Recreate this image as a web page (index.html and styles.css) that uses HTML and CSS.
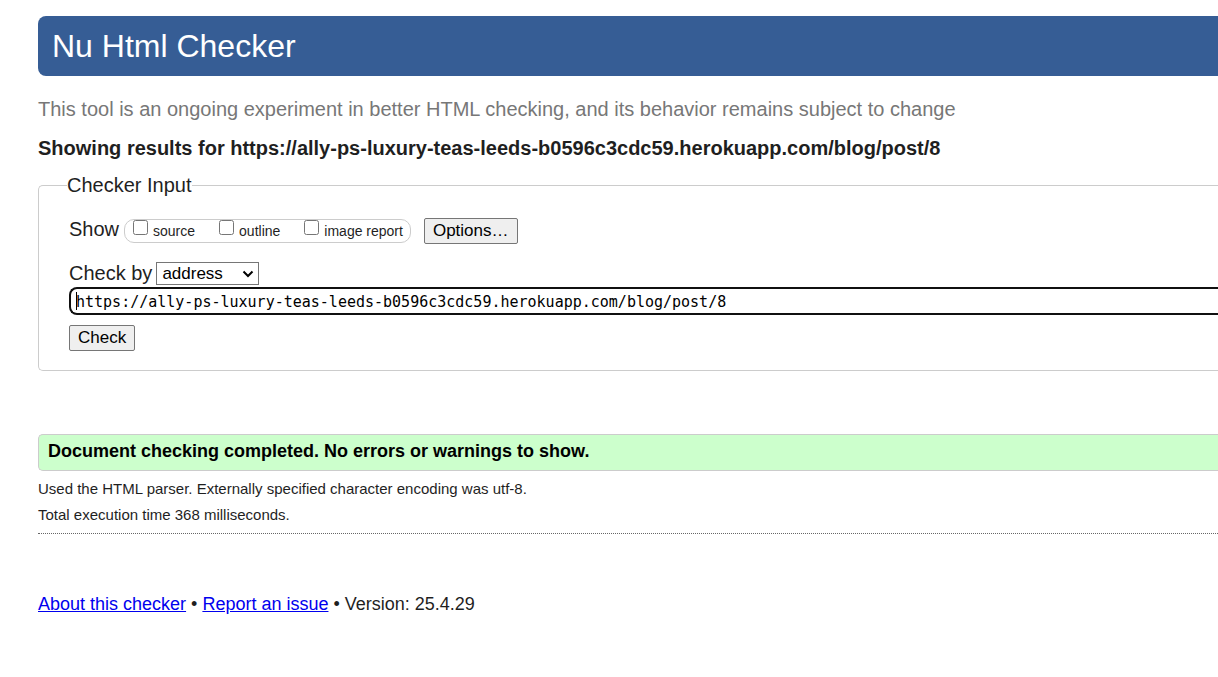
FILE: index.html
```html
<!DOCTYPE html>
<html lang="en">
<head>
<meta charset="utf-8">
<title>Nu Html Checker</title>
<link rel="stylesheet" href="styles.css">
</head>
<body>
<header class="banner"><h1 class="banner-title">Nu Html Checker</h1></header>
<main>
  <p class="note">This tool is an ongoing experiment in better HTML checking, and its behavior remains subject to change</p>
  <h2 class="heading">Showing results for https://ally-ps-luxury-teas-leeds-b0596c3cdc59.herokuapp.com/blog/post/8</h2>
  <form>
    <fieldset class="panel">
      <legend class="legend">Checker Input</legend>
      <div class="show-row">
        <span class="show-label">Show</span>
        <div class="checks">
          <label class="check"><input class="box" type="checkbox"><span>source</span></label>
          <label class="check"><input class="box" type="checkbox"><span>outline</span></label>
          <label class="check"><input class="box" type="checkbox"><span>image report</span></label>
        </div>
        <button class="button" type="button">Options…</button>
      </div>
      <div class="by-row">
        <label for="method">Check by</label>
        <div class="select-wrap">
          <select class="select" id="method"><option>address</option><option>file upload</option><option>text input</option></select>
          <svg class="chevron" viewBox="0 0 12 8" aria-hidden="true"><path d="M1.5 1.5 6 6 10.5 1.5" fill="none" stroke="#000" stroke-width="2"/></svg>
        </div>
      </div>
      <div class="address-wrap">
        <input class="address" type="url" aria-label="Address" value="https://ally-ps-luxury-teas-leeds-b0596c3cdc59.herokuapp.com/blog/post/8">
      </div>
      <button class="button" type="submit">Check</button>
    </fieldset>
  </form>
  <p class="success">Document checking completed. No errors or warnings to show.</p>
  <div class="details">
    <p class="detail">Used the HTML parser. Externally specified character encoding was utf-8.</p>
    <p class="detail">Total execution time 368 milliseconds.</p>
  </div>
</main>
<footer class="footer"><a href="#about">About this checker</a> • <a href="#issue">Report an issue</a> • Version: 25.4.29</footer>
</body>
</html>
```
FILE: styles.css
```css
* { box-sizing: border-box; }
body {
  margin: 0;
  padding: 16px 0 16px 38px;
  background: #fff;
  color: #1f1f1f;
  font: 20px/24px "Liberation Sans", Arial, sans-serif;
}
.banner {
  padding: 10px 14px;
  background: #365d95;
  border-radius: 8px 0 0 8px;
}
.banner-title {
  margin: 0;
  color: #fff;
  font-size: 32px;
  font-weight: 400;
  line-height: 40px;
}
.note { margin: 21px 0 0; color: #777; }
.heading { margin: 15px 0 13px; font-size: 20px; line-height: 24px; }
.panel {
  min-width: 0;
  margin: 0;
  padding: 20px 0 19px 30px;
  border: 1px solid #ccc;
  border-right: 0;
  border-radius: 5px 0 0 5px;
}
.legend { margin-left: -2px; padding: 0; }
.show-row { display: flex; align-items: center; }
.show-label { padding-bottom: 3px; }
.checks {
  display: flex;
  gap: 24px;
  height: 24px;
  margin: 0 13px 0 5px;
  padding: 0 7px 0 8px;
  border: 1px solid #ccc;
  border-radius: 10px;
  font-size: 14px;
  line-height: 22px;
}
.check { display: flex; gap: 5px; }
.box { width: 15px; height: 15px; margin: 0; }
.button {
  height: 26px;
  padding: 0 8px;
  background: #efefef;
  border: 1px solid #767676;
  border-radius: 2px;
  color: #000;
  font: 17px/22px "Liberation Sans", Arial, sans-serif;
}
.by-row { display: flex; align-items: center; gap: 4px; margin-top: 17px; }
.select-wrap { position: relative; }
.select {
  display: block;
  appearance: none;
  width: 103px;
  height: 23px;
  padding: 0 5px;
  background: #fff;
  border: 1px solid #767676;
  border-radius: 0;
  color: #000;
  font: 17px/21px "Liberation Sans", Arial, sans-serif;
}
.chevron { position: absolute; top: 8px; right: 5px; width: 12px; height: 8px; pointer-events: none; }
.address-wrap { position: relative; margin: 2px 0 9px; }
.address-wrap::before {
  content: "";
  position: absolute;
  top: 5px;
  left: 7px;
  width: 1px;
  height: 18px;
  background: #000;
}
.address {
  display: block;
  width: 100%;
  height: 28px;
  padding: 1px 5px 0;
  background: #fff;
  border: 2px solid #101010;
  border-right: 0;
  border-radius: 8px 0 0 8px;
  outline: 0;
  color: #000;
  font: 15px/23px Consolas, "DejaVu Sans Mono", monospace;
}
.success {
  margin: 63px 0 0;
  padding: 4px 9px 7px;
  background: #cfc;
  border: 1px solid #ccc;
  border-right: 0;
  border-radius: 5px 0 0 5px;
  color: #000;
  font-size: 18px;
  font-weight: 700;
}
.details { padding: 5px 0; border-bottom: 1px dotted #666; }
.detail { margin: 0; font-size: 15px; line-height: 26px; }
.footer { margin-top: 58px; font-size: 18px; }
.footer a { color: #00e; }
```
